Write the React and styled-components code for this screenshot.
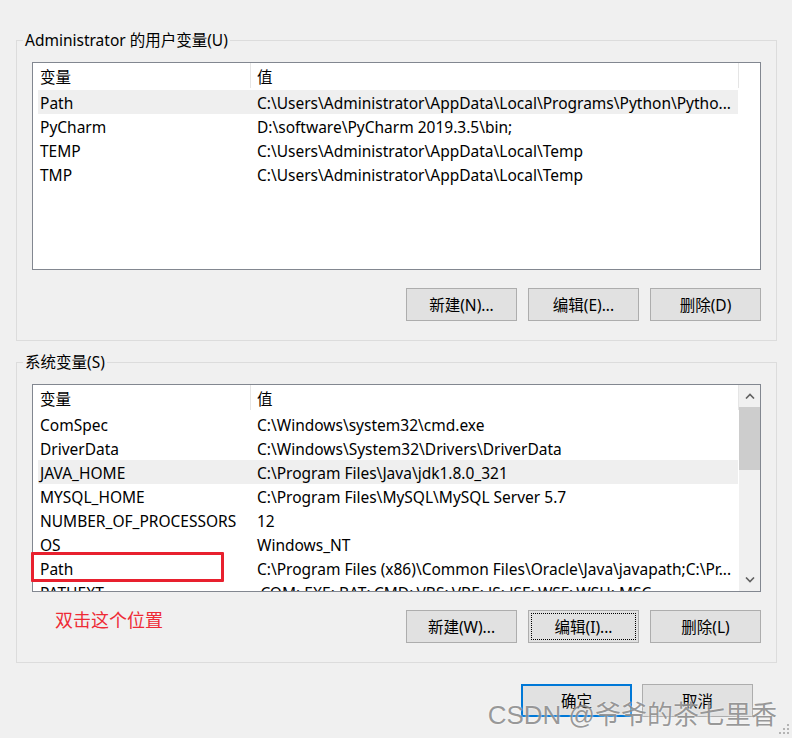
import React from "react";
import styled, { createGlobalStyle } from "styled-components";

const userVars = [
  { name: "Path", value: "C:\\Users\\Administrator\\AppData\\Local\\Programs\\Python\\Pytho...", selected: true },
  { name: "PyCharm", value: "D:\\software\\PyCharm 2019.3.5\\bin;" },
  { name: "TEMP", value: "C:\\Users\\Administrator\\AppData\\Local\\Temp" },
  { name: "TMP", value: "C:\\Users\\Administrator\\AppData\\Local\\Temp" },
];

const systemVars = [
  { name: "ComSpec", value: "C:\\Windows\\system32\\cmd.exe" },
  { name: "DriverData", value: "C:\\Windows\\System32\\Drivers\\DriverData" },
  { name: "JAVA_HOME", value: "C:\\Program Files\\Java\\jdk1.8.0_321", selected: true },
  { name: "MYSQL_HOME", value: "C:\\Program Files\\MySQL\\MySQL Server 5.7" },
  { name: "NUMBER_OF_PROCESSORS", value: "12" },
  { name: "OS", value: "Windows_NT" },
  { name: "Path", value: "C:\\Program Files (x86)\\Common Files\\Oracle\\Java\\javapath;C:\\Pr..." },
  { name: "PATHEXT", value: ".COM;.EXE;.BAT;.CMD;.VBS;.VBE;.JS;.JSE;.WSF;.WSH;.MSC" },
];

function VarList({ rows, scroll }) {
  return (
    <ListView>
      <ListBody>
        <Header>
          <HeaderCell $w={218} $pad={7}>变量</HeaderCell>
          <HeaderCell $w={488} $pad={6}>值</HeaderCell>
        </Header>
        {rows.map((r, i) => (
          <Row key={i} $selected={r.selected}>
            <NameCell>{r.name}</NameCell>
            <ValueCell>{r.value}</ValueCell>
          </Row>
        ))}
      </ListBody>
      {scroll ? (
        <ScrollBar>
          <ArrowButton>
            <svg width="10" height="6" viewBox="0 0 10 6">
              <polyline points="1,5.5 5,1.5 9,5.5" fill="none" stroke="#606060" strokeWidth="1.6" />
            </svg>
          </ArrowButton>
          <Track>
            <Thumb />
          </Track>
          <ArrowButton>
            <svg width="10" height="6" viewBox="0 0 10 6">
              <polyline points="1,0.5 5,4.5 9,0.5" fill="none" stroke="#606060" strokeWidth="1.6" />
            </svg>
          </ArrowButton>
        </ScrollBar>
      ) : (
        <Spacer />
      )}
    </ListView>
  );
}

export default function App() {
  return (
    <Page>
      <GlobalStyle />
      <Group>
        <Legend>Administrator 的用户变量(U)</Legend>
        <VarList rows={userVars} />
        <ButtonRow>
          <Button>新建(N)...</Button>
          <Button>编辑(E)...</Button>
          <Button>删除(D)</Button>
        </ButtonRow>
      </Group>

      <Group $second>
        <Legend>系统变量(S)</Legend>
        <ListWrap>
          <VarList rows={systemVars} scroll />
          <RedMark />
        </ListWrap>
        <ButtonRow>
          <Hint>双击这个位置</Hint>
          <Button>新建(W)...</Button>
          <Button $focused>编辑(I)...</Button>
          <Button>删除(L)</Button>
        </ButtonRow>
      </Group>

      <Footer>
        <Button $primary>确定</Button>
        <Button>取消</Button>
      </Footer>

      <Watermark>CSDN @爷爷的茶七里香</Watermark>
      <Grip>
        <svg width="12" height="12" viewBox="0 0 12 12" fill="#b4b4b4">
          <rect x="9" y="1" width="2" height="2" />
          <rect x="5" y="5" width="2" height="2" />
          <rect x="9" y="5" width="2" height="2" />
          <rect x="1" y="9" width="2" height="2" />
          <rect x="5" y="9" width="2" height="2" />
          <rect x="9" y="9" width="2" height="2" />
        </svg>
      </Grip>
    </Page>
  );
}

const GlobalStyle = createGlobalStyle`
  html, body {
    margin: 0;
    background: #f0f0f0;
  }
  body {
    font-family: "Noto Sans", "Noto Sans CJK SC", sans-serif;
    font-size: 15.5px;
    color: #000;
  }
`;

const Page = styled.div`
  position: relative;
  width: 792px;
  height: 738px;
  box-sizing: border-box;
  padding-top: 30px;
  overflow: hidden;
`;

const Group = styled.fieldset`
  margin: ${(p) => (p.$second ? "11px" : "0")} 15px 0 16px;
  padding: 12px 15px 19px;
  border: 1px solid #dcdcdc;
  min-width: 0;
`;

const Legend = styled.legend`
  margin-left: -9px;
  padding: 0 2px;
  line-height: 20px;
`;

const ListWrap = styled.div`
  position: relative;
`;

const ListView = styled.div`
  display: flex;
  height: 208px;
  box-sizing: border-box;
  border: 1px solid #828790;
  background: #fff;
  overflow: hidden;
`;

const ListBody = styled.div`
  flex: 1;
  min-width: 0;
`;

const Header = styled.div`
  display: flex;
  height: 27px;
`;

const HeaderCell = styled.div`
  width: ${(p) => p.$w}px;
  box-sizing: border-box;
  padding-left: ${(p) => p.$pad}px;
  height: 25px;
  line-height: 28px;
  border-right: 1px solid #e5e5e5;
`;

const Row = styled.div`
  display: flex;
  width: 700px;
  height: 24px;
  box-sizing: border-box;
  padding-top: 1px;
  margin-left: 5px;
  line-height: 24px;
  background: ${(p) => (p.$selected ? "#efefef" : "transparent")};
`;

const NameCell = styled.div`
  width: 212px;
  box-sizing: border-box;
  padding-left: 2px;
  white-space: nowrap;
`;

const ValueCell = styled.div`
  flex: 1;
  min-width: 0;
  padding-left: 7px;
  white-space: nowrap;
  overflow: hidden;
  text-overflow: ellipsis;
`;

const Spacer = styled.div`
  width: 21px;
`;

const ScrollBar = styled.div`
  width: 21px;
  display: flex;
  flex-direction: column;
  background: #f0f0f0;
`;

const ArrowButton = styled.div`
  height: 22px;
  display: flex;
  align-items: center;
  justify-content: center;
`;

const Track = styled.div`
  flex: 1;
`;

const Thumb = styled.div`
  height: 63px;
  background: #cdcdcd;
`;

const RedMark = styled.div`
  position: absolute;
  left: -1px;
  top: 168px;
  width: 193px;
  height: 30px;
  box-sizing: border-box;
  border: 3px solid #e8202e;
  border-radius: 1px;
`;

const ButtonRow = styled.div`
  display: flex;
  justify-content: flex-end;
  gap: 11px;
  margin-top: 18px;
`;

const Hint = styled.div`
  margin-right: auto;
  margin-left: 23px;
  font-family: "Noto Sans CJK SC", sans-serif;
  font-size: 18px;
  line-height: 18px;
  color: #ee2b36;
`;

const Button = styled.button`
  width: 111px;
  height: 33px;
  box-sizing: border-box;
  padding: 0;
  font-family: inherit;
  font-size: 15.5px;
  color: #000;
  background: #e1e1e1;
  border: ${(p) => (p.$primary ? "2px solid #0078d7" : "1px solid #adadad")};
  outline: ${(p) => (p.$focused ? "1px dotted #000" : "none")};
  outline-offset: -4px;
`;

const Footer = styled.div`
  display: flex;
  justify-content: flex-end;
  gap: 10px;
  margin-top: 21px;
  padding-right: 39px;
`;

const Watermark = styled.div`
  position: absolute;
  right: 15px;
  bottom: 10px;
  font-family: "Liberation Sans", "Noto Sans CJK SC", sans-serif;
  font-size: 26px;
  line-height: 26px;
  color: rgba(120, 120, 120, 0.75);
  text-shadow: 0 0 2px rgba(255, 255, 255, 0.9);
  white-space: nowrap;
`;

const Grip = styled.div`
  position: absolute;
  right: 2px;
  bottom: 3px;
  line-height: 0;
`;
